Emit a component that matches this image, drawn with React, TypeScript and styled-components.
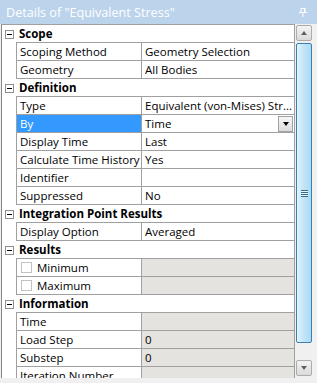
import React from 'react';
import styled, { createGlobalStyle, css } from 'styled-components';

const GlobalStyle = createGlobalStyle`
  html, body {
    margin: 0;
    padding: 0;
    background: #f0f0f0;
  }
  body {
    font-family: "Open Sans", "Liberation Sans", sans-serif;
  }
`;

const Window = styled.div`
  width: 317px;
  height: 383px;
  overflow: hidden;
  display: flex;
  flex-direction: column;
  background: #f0f0f0;
`;

const TitleBar = styled.div`
  height: 24px;
  flex-shrink: 0;
  display: flex;
  align-items: center;
  justify-content: space-between;
  padding: 0 10px 0 6px;
  box-sizing: border-box;
  background: #bcd3ec;
  color: #fff;
  font-size: 12.6px;
`;

const PinIcon = () => (
  <svg width="8" height="9" viewBox="0 0 8 9" style={{ display: 'block' }}>
    <rect x="2" y="0.5" width="4" height="4" fill="none" stroke="#fff" />
    <rect x="5" y="1" width="1" height="3" fill="#fff" />
    <rect x="0" y="4" width="8" height="1" fill="#fff" />
    <rect x="3.5" y="5" width="1" height="4" fill="#fff" />
  </svg>
);

const Body = styled.div`
  display: flex;
  height: 354px;
  flex-shrink: 0;
  padding-left: 1px;
  overflow: hidden;
`;

const Grid = styled.div`
  width: 294px;
  box-sizing: border-box;
  border-left: 1px solid #828790;
  border-right: 1px solid #a0a0a0;
  border-top: 1px solid #a0a0a0;
  background: #fff;
  overflow: hidden;
  font-size: 11.5px;
  color: #000;
`;

const Row = styled.div`
  display: grid;
  grid-template-columns: 14px 126px 1fr;
  height: 18px;
`;

const Gutter = styled.div`
  display: flex;
  align-items: center;
  padding-left: 3px;
`;

const MinusBox = styled.div`
  width: 9px;
  height: 9px;
  box-sizing: border-box;
  border: 1px solid #8e8f8f;
  background: #fff;
  display: flex;
  align-items: center;
  justify-content: center;

  &::after {
    content: '';
    width: 5px;
    height: 1px;
    background: #000;
  }
`;

const cellBase = css`
  box-sizing: border-box;
  height: 18px;
  line-height: 17px;
  border-bottom: 1px solid #a0a0a0;
  padding-left: 3px;
  white-space: nowrap;
  overflow: hidden;
`;

const CategoryLabel = styled.div`
  ${cellBase}
  grid-column: 2 / 4;
  font-weight: bold;
`;

const NameCell = styled.div<{ $selected?: boolean }>`
  ${cellBase}
  display: flex;
  align-items: center;
  border-left: 1px solid #a0a0a0;
  border-right: 1px solid #a0a0a0;
  background: ${(p) => (p.$selected ? '#3399ff' : '#fff')};
  color: ${(p) => (p.$selected ? '#fff' : '#000')};
`;

const ValueCell = styled.div<{ $readonly?: boolean }>`
  ${cellBase}
  display: flex;
  align-items: center;
  justify-content: space-between;
  background: ${(p) => (p.$readonly ? '#e5e3df' : '#fff')};
`;

const CheckBox = styled.span`
  width: 11px;
  height: 11px;
  box-sizing: border-box;
  border: 1px solid #c2c2c2;
  background: #fff;
  margin: 0 5px 0 1px;
  flex-shrink: 0;
`;

const DropButton = styled.div`
  width: 15px;
  height: 16px;
  box-sizing: border-box;
  margin-right: 1px;
  border: 1px solid #a3a3a3;
  background: linear-gradient(#f6f6f6, #dcdcdc);
  display: flex;
  align-items: center;
  justify-content: center;

  &::after {
    content: '';
    border-left: 3.5px solid transparent;
    border-right: 3.5px solid transparent;
    border-top: 4px solid #000;
  }
`;

const ScrollBar = styled.div`
  width: 19px;
  flex-shrink: 0;
  display: flex;
  flex-direction: column;
  padding: 1px 0 2px 1px;
  box-sizing: border-box;
  background: #f0f0f0;
`;

const ArrowButton = styled.div<{ $down?: boolean }>`
  width: 16px;
  height: 16px;
  box-sizing: border-box;
  border: 1px solid #acacac;
  border-radius: 2px;
  background: linear-gradient(#f3f3f3, #dadada);
  display: flex;
  align-items: center;
  justify-content: center;

  &::after {
    content: '';
    border-left: 3.5px solid transparent;
    border-right: 3.5px solid transparent;
    ${(p) =>
      p.$down
        ? 'border-top: 4px solid #606060;'
        : 'border-bottom: 4px solid #606060;'}
  }
`;

const Track = styled.div`
  flex: 1;
`;

const Thumb = styled.div`
  width: 16px;
  height: 300px;
  margin-top: 2px;
  box-sizing: border-box;
  border: 1px solid #3c7fb1;
  border-radius: 2px;
  background: linear-gradient(to right, #e3f4fc, #c4e5f8 45%, #a9dbf6);
  display: flex;
  align-items: center;
  justify-content: center;
`;

const Grip = styled.div`
  width: 7px;
  height: 7px;
  background: repeating-linear-gradient(
    #3d6a8a 0 1px,
    #e8f4fb 1px 2px
  );
`;

type Prop = {
  name: string;
  value?: string;
  readonly?: boolean;
  selected?: boolean;
  dropdown?: boolean;
  check?: boolean;
};

type Category = { title: string; props: Prop[] };

const categories: Category[] = [
  {
    title: 'Scope',
    props: [
      { name: 'Scoping Method', value: 'Geometry Selection' },
      { name: 'Geometry', value: 'All Bodies' },
    ],
  },
  {
    title: 'Definition',
    props: [
      { name: 'Type', value: 'Equivalent (von-Mises) Str...' },
      { name: 'By', value: 'Time', selected: true, dropdown: true },
      { name: 'Display Time', value: 'Last' },
      { name: 'Calculate Time History', value: 'Yes' },
      { name: 'Identifier', value: '' },
      { name: 'Suppressed', value: 'No' },
    ],
  },
  {
    title: 'Integration Point Results',
    props: [{ name: 'Display Option', value: 'Averaged' }],
  },
  {
    title: 'Results',
    props: [
      { name: 'Minimum', readonly: true, check: true },
      { name: 'Maximum', readonly: true, check: true },
    ],
  },
  {
    title: 'Information',
    props: [
      { name: 'Time', readonly: true },
      { name: 'Load Step', value: '0', readonly: true },
      { name: 'Substep', value: '0', readonly: true },
      { name: 'Iteration Number', readonly: true },
    ],
  },
];

export default function App() {
  return (
    <>
      <GlobalStyle />
      <Window>
        <TitleBar>
          <span>Details of "Equivalent Stress"</span>
          <PinIcon />
        </TitleBar>
        <Body>
          <Grid>
            {categories.map((cat) => (
              <React.Fragment key={cat.title}>
                <Row>
                  <Gutter>
                    <MinusBox />
                  </Gutter>
                  <CategoryLabel>{cat.title}</CategoryLabel>
                </Row>
                {cat.props.map((p) => (
                  <Row key={p.name}>
                    <Gutter />
                    <NameCell $selected={p.selected}>
                      {p.check && <CheckBox />}
                      {p.name}
                    </NameCell>
                    <ValueCell $readonly={p.readonly}>
                      <span>{p.value}</span>
                      {p.dropdown && <DropButton />}
                    </ValueCell>
                  </Row>
                ))}
              </React.Fragment>
            ))}
          </Grid>
          <ScrollBar>
            <ArrowButton />
            <Track>
              <Thumb>
                <Grip />
              </Thumb>
            </Track>
            <ArrowButton $down />
          </ScrollBar>
        </Body>
      </Window>
    </>
  );
}
